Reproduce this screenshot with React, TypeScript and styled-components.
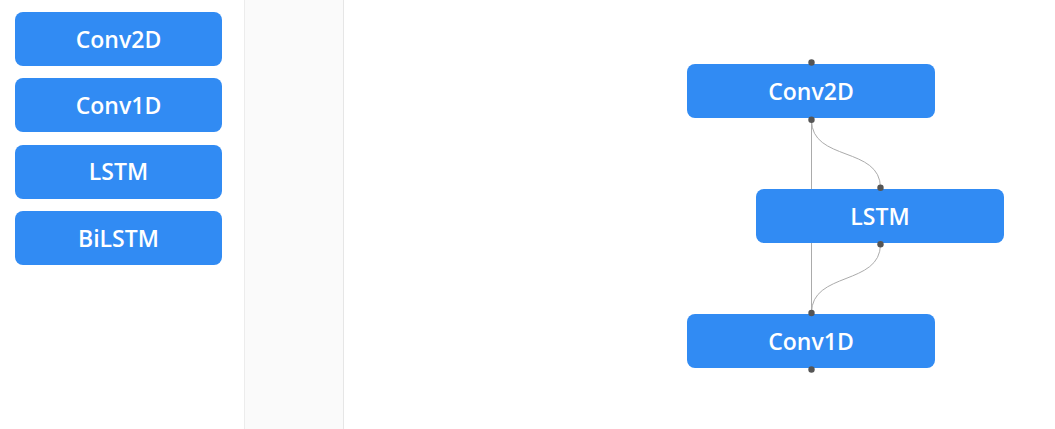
import React from "react";
import styled, { createGlobalStyle } from "styled-components";

const Global = createGlobalStyle`
  html, body { margin: 0; padding: 0; background: #fff; }
  body { font-family: "Open Sans", "Noto Sans", sans-serif; }
`;

const Page = styled.div`
  display: flex;
  height: 429px;
  width: 1055px;
  overflow: hidden;
`;

const Palette = styled.div`
  width: 244px;
  box-sizing: border-box;
  padding: 12px 22px 0 15px;
  display: flex;
  flex-direction: column;
  gap: 12.4px;
`;

const Block = styled.div<{ $w?: number }>`
  width: ${(p) => p.$w ?? 207}px;
  height: 54px;
  flex: none;
  box-sizing: border-box;
  background: #318bf3;
  border-radius: 8px;
  color: #fff;
  font-family: "Open Sans", sans-serif;
  font-size: 23px;
  font-weight: 600;
  display: flex;
  align-items: center;
  justify-content: center;
  line-height: 1;
`;

const Panel = styled.div`
  width: 100px;
  box-sizing: border-box;
  background: #fafafa;
  border-left: 1px solid #ececec;
  border-right: 1px solid #e6e6e6;
`;

const Canvas = styled.div`
  position: relative;
  flex: 1;
`;

const Node = styled(Block)<{ $x: number; $y: number }>`
  position: absolute;
  left: ${(p) => p.$x}px;
  top: ${(p) => p.$y}px;
`;

const Edges = styled.svg`
  position: absolute;
  inset: 0;
  width: 100%;
  height: 100%;
  pointer-events: none;
`;

const Ports = styled(Edges)``;

const A = 467.5;
const B = 536.5;

export default function App() {
  return (
    <>
      <Global />
      <Page>
        <Palette>
          <Block>Conv2D</Block>
          <Block>Conv1D</Block>
          <Block>LSTM</Block>
          <Block>BiLSTM</Block>
        </Palette>
        <Panel />
        <Canvas>
          <Edges>
            <g fill="none" stroke="#ababab" strokeWidth="1">
              <line x1={A} y1={120} x2={A} y2={313} />
              <path d={`M${A} 120 C ${A} 162, ${B} 146, ${B} 188`} />
              <path d={`M${B} 244 C ${B} 286, ${A} 271, ${A} 313`} />
            </g>
          </Edges>
          <Node $w={248} $x={343} $y={64}>Conv2D</Node>
          <Node $w={248} $x={412} $y={189}>LSTM</Node>
          <Node $w={248} $x={343} $y={314}>Conv1D</Node>
          <Ports>
            <g fill="#555">
              <circle cx={A} cy={62.5} r={3.2} />
              <circle cx={A} cy={119.7} r={3.2} />
              <circle cx={B} cy={187.7} r={3.2} />
              <circle cx={B} cy={244.3} r={3.2} />
              <circle cx={A} cy={313} r={3.2} />
              <circle cx={A} cy={369.5} r={3.2} />
            </g>
          </Ports>
        </Canvas>
      </Page>
    </>
  );
}
